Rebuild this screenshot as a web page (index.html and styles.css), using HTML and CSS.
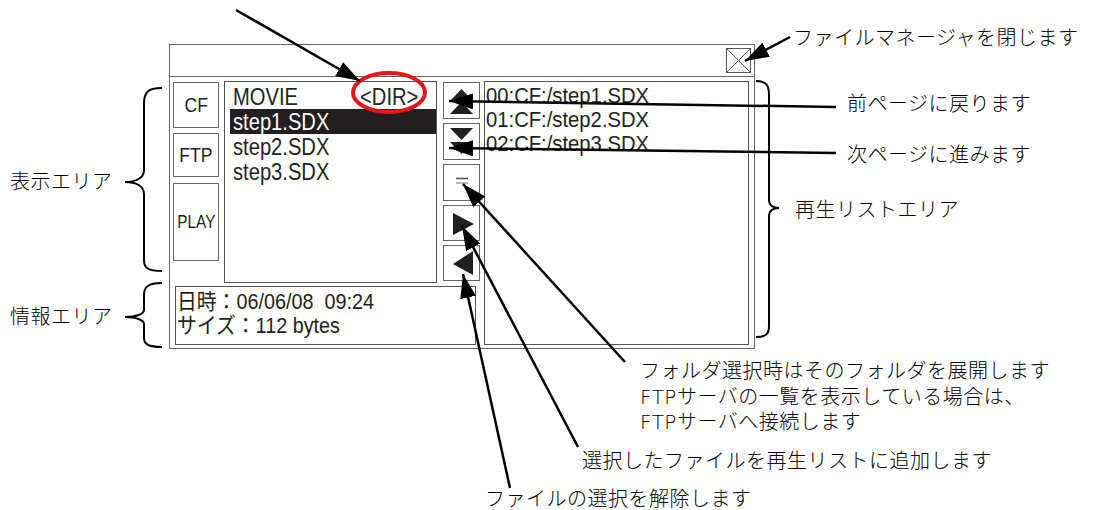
FILE: index.html
```html
<!DOCTYPE html>
<html lang="ja">
<head>
    <meta charset="UTF-8">
    <title>ファイルマネージャ</title>
    <link rel="stylesheet" href="styles.css">
</head>
<body>

<div class="page">

    <div class="window">
        <div class="titlebar">
            <div class="close">
                <svg width="23" height="23" viewBox="0 0 23 23">
                    <line x1="0" y1="0" x2="23" y2="23" stroke="#555" stroke-width="1"/>
                    <line x1="23" y1="0" x2="0" y2="23" stroke="#555" stroke-width="1"/>
                </svg>
            </div>
        </div>

        <div class="body">
            <div class="left">
                <div class="top">
                    <div class="sources">
                        <div class="src cf"><span>CF</span></div>
                        <div class="src ftp"><span>FTP</span></div>
                        <div class="src play"><span>PLAY</span></div>
                    </div>

                    <div class="files">
                        <div class="row"><span>MOVIE</span><span class="dir">&lt;DIR&gt;</span></div>
                        <div class="row selected"><span>step1.SDX</span></div>
                        <div class="row"><span>step2.SDX</span></div>
                        <div class="row"><span>step3.SDX</span></div>
                    </div>

                    <div class="nav">
                        <div class="btn">
                            <svg width="35" height="35" viewBox="0 0 35 35">
                                <polygon points="17.5,6 6,18 29,18" fill="#231f20"/>
                                <polygon points="17.5,19 6,31 29,31" fill="#231f20"/>
                            </svg>
                        </div>
                        <div class="btn">
                            <svg width="35" height="35" viewBox="0 0 35 35">
                                <polygon points="6,4 29,4 17.5,16" fill="#231f20"/>
                                <polygon points="6,18 29,18 17.5,30" fill="#231f20"/>
                            </svg>
                        </div>
                        <div class="btn">
                            <svg width="35" height="35" viewBox="0 0 35 35">
                                <line x1="12" y1="13.5" x2="24" y2="13.5" stroke="#555" stroke-width="1.6"/>
                                <line x1="12" y1="18" x2="24" y2="18" stroke="#777" stroke-width="1"/>
                            </svg>
                        </div>
                        <div class="btn short">
                            <svg width="35" height="34" viewBox="0 0 35 34">
                                <polygon points="9,7 9,29 30,18" fill="#231f20"/>
                            </svg>
                        </div>
                        <div class="btn short">
                            <svg width="35" height="34" viewBox="0 0 35 34">
                                <polygon points="29,5 29,29 9,18" fill="#231f20"/>
                            </svg>
                        </div>
                    </div>
                </div>

                <div class="info">
                    <div>日時：06/06/08&nbsp;&nbsp;09:24</div>
                    <div>サイズ：112 bytes</div>
                </div>
            </div>

            <div class="playlist">
                <div>00:CF:/step1.SDX</div>
                <div>01:CF:/step2.SDX</div>
                <div>02:CF:/step3.SDX</div>
            </div>
        </div>
    </div>

    <!-- callout lines, braces and the red mark -->
    <svg class="overlay" width="1101" height="510" viewBox="0 0 1101 510">
        <defs>
            <marker id="head" markerWidth="24" markerHeight="16" refX="24" refY="8"
                    orient="auto" markerUnits="userSpaceOnUse">
                <path d="M0,0 L24,8 L0,16 z" fill="#000"/>
            </marker>
        </defs>

        <ellipse cx="389" cy="92.5" rx="36" ry="19.5" fill="none" stroke="#e8151b" stroke-width="4"/>

        <g stroke="#000" stroke-width="2.5" fill="none" marker-end="url(#head)">
            <line x1="236" y1="10" x2="360" y2="81"/>
            <line x1="790" y1="37" x2="745" y2="61"/>
            <line x1="836" y1="107" x2="449" y2="101"/>
            <line x1="836" y1="153" x2="449" y2="148"/>
            <line x1="625" y1="362" x2="463" y2="184"/>
            <line x1="578" y1="447" x2="462" y2="226"/>
            <line x1="510" y1="488" x2="463" y2="274"/>
        </g>

        <g stroke="#000" stroke-width="2" fill="none">
            <path d="M162,88 C148,88 144,92 144,104 L144,170 C144,178 136,182 125,182 C136,182 144,186 144,194 L144,260 C144,268 148,271 162,271"/>
            <path d="M162,283 C148,283 144,287 144,295 L144,310 C144,314 136,317 125,317 C136,317 144,320 144,324 L144,338 C144,344 148,347 162,347"/>
            <path d="M756,81 C766,81 769,85 769,95 L769,200 C769,205 773,208 779,208 C773,208 769,211 769,216 L769,326 C769,334 766,337 756,337"/>
        </g>
    </svg>

    <div class="note" style="left:793px; top:25px;">ファイルマネージャを閉じます</div>
    <div class="note" style="left:847px; top:91px;">前ページに戻ります</div>
    <div class="note" style="left:847px; top:142px;">次ページに進みます</div>
    <div class="note" style="left:795px; top:197px;">再生リストエリア</div>
    <div class="note" style="left:10px; top:169px;">表示エリア</div>
    <div class="note" style="left:10px; top:304px;">情報エリア</div>
    <div class="note block" style="left:640px; top:359px;">
        フォルダ選択時はそのフォルダを展開します<br>
        FTPサーバの一覧を表示している場合は、<br>
        FTPサーバへ接続します
    </div>
    <div class="note" style="left:582px; top:448px;">選択したファイルを再生リストに追加します</div>
    <div class="note" style="left:485px; top:486px;">ファイルの選択を解除します</div>

</div>

</body>
</html>
```

FILE: styles.css
```css
body {
    margin: 0;
    background: #fff;
}
.page {
    position: relative;
    width: 1101px;
    height: 510px;
    overflow: hidden;
    color: #231f20;
}

/* the file manager window */
.window {
    margin: 44px 0 0 169px;
    width: 586px;
    height: 305px;
    box-sizing: border-box;
    border: 1px solid #666;
    display: flex;
    flex-direction: column;
    font-family: "Liberation Sans", "Noto Sans CJK JP", sans-serif;
}
.titlebar {
    height: 32px;
    border-bottom: 1px solid #666;
    display: flex;
    justify-content: flex-end;
    align-items: flex-start;
    padding: 3px 3px 0 0;
    box-sizing: border-box;
}
.close {
    width: 25px;
    height: 25px;
    box-sizing: border-box;
    border: 1px solid #555;
}
.close svg {
    display: block;
}
.body {
    flex: 1;
    display: flex;
    gap: 4px;
    padding: 4px 5px 3px 3px;
}
.left {
    width: 307px;
    display: flex;
    flex-direction: column;
}
.top {
    height: 202px;
    display: flex;
}
.sources {
    width: 46px;
    margin-top: 1px;
    display: flex;
    flex-direction: column;
}
.src {
    box-sizing: border-box;
    border: 1px solid #666;
    display: flex;
    align-items: center;
    justify-content: center;
    font-size: 20px;
}
.src span {
    display: inline-block;
    transform: scaleX(0.88);
}
.cf {
    height: 46px;
}
.ftp {
    height: 44px;
    margin-top: 5px;
}
.play {
    height: 78px;
    margin-top: 6px;
    font-size: 18px !important;
}
.play span {
    transform: scaleX(0.85);
}
.files {
    width: 213px;
    margin-left: 5px;
    box-sizing: border-box;
    border: 1px solid #555;
    padding-top: 2px;
    font-size: 24px;
}
.row {
    height: 25px;
    line-height: 25px;
    margin-left: 5px;
    padding: 0 18px 0 3px;
    display: flex;
    justify-content: space-between;
}
.row span {
    display: inline-block;
    transform: scaleX(0.84);
    transform-origin: left center;
}
.row .dir {
    transform-origin: right center;
}
.row.selected {
    background: #231f20;
    color: #fff;
}
.nav {
    width: 37px;
    margin-left: 6px;
    margin-top: 1px;
    display: flex;
    flex-direction: column;
    gap: 4px;
}
.btn {
    height: 37px;
    box-sizing: border-box;
    border: 1px solid #666;
}
.btn.short {
    height: 36px;
}
.btn svg {
    display: block;
}
.info {
    margin: 3px 4px 0 2px;
    height: 59px;
    box-sizing: border-box;
    border: 1px solid #555;
    padding: 3px 0 0 1px;
    font-size: 22px;
    line-height: 24px;
}
.info div {
    transform: scaleX(0.9);
    transform-origin: left center;
    white-space: nowrap;
}
.playlist {
    flex: 1;
    box-sizing: border-box;
    border: 1px solid #555;
    padding: 2px 0 0 1px;
    font-size: 22px;
    line-height: 24px;
}
.playlist div {
    transform: scaleX(0.92);
    transform-origin: left center;
    white-space: nowrap;
}

/* diagram callouts */
.overlay {
    position: absolute;
    left: 0;
    top: 0;
}
.note {
    position: absolute;
    font-family: "DejaVu Sans", "Noto Sans CJK JP", sans-serif;
    font-size: 20px;
    font-weight: 300;
    line-height: 26px;
    letter-spacing: 0.5px;
    color: #000;
    white-space: nowrap;
}
.note.block {
    line-height: 25.5px;
}
```
